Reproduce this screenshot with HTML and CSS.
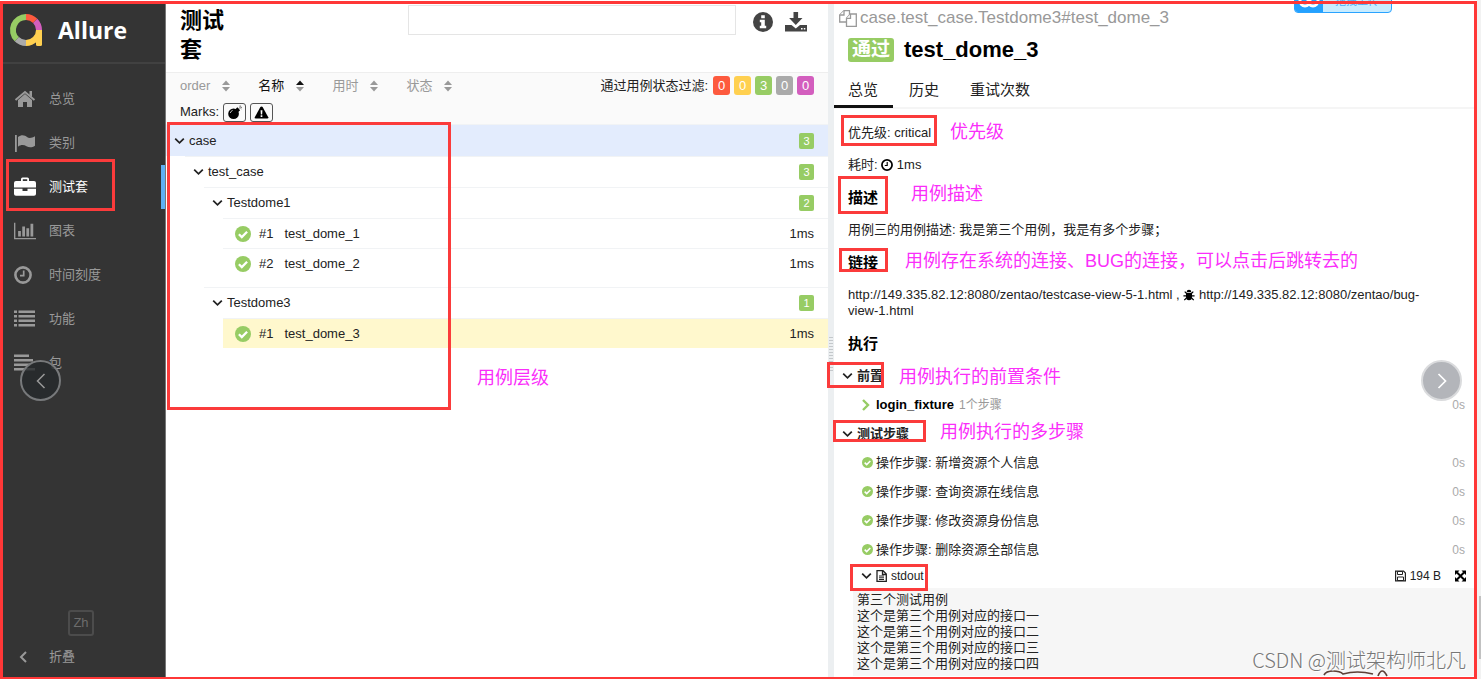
FILE: index.html
```html
<!DOCTYPE html>
<html lang="zh-CN">
<head>
<meta charset="utf-8">
<title>Allure</title>
<link rel="stylesheet" href="styles.css">
</head>
<body>
<svg class="defs" aria-hidden="true">
  <symbol id="check" viewBox="0 0 16 16"><circle cx="8" cy="8" r="8" fill="#97cc64"/><path d="M3.900 8.200l2.900 2.900 5.300-5.300" fill="none" stroke="#fff" stroke-width="2.300"/></symbol>
  <symbol id="down" viewBox="0 0 12 8"><path d="M1.300 1.300L6 6l4.700-4.700" fill="none" stroke="currentColor" stroke-width="1.900"/></symbol>
  <symbol id="sort" viewBox="0 0 8 12"><path class="up" d="M0 5l4-4.500L8 5z"/><path class="dn" d="M0 7l4 4.500L8 7z"/></symbol>
  <symbol id="clock" viewBox="0 0 18 18"><circle cx="9" cy="9" r="7.600" fill="none" stroke="currentColor" stroke-width="2.600"/><path d="M9.300 4.500v5.200H5.700" fill="none" stroke="currentColor" stroke-width="1.700"/></symbol>
</svg>
<div class="frame">
  <aside class="side">
    <a class="brand" href="#">
      <svg class="logo" viewBox="0 0 34 34"><g fill="none" stroke-width="6"><path d="M17 4A13 13 0 0 1 26.200 7.800" stroke="#fd5a3e"/><path d="M26.200 7.800A13 13 0 0 1 30 17" stroke="#d35ebe"/><path d="M30 17A13 13 0 0 1 17 30" stroke="#ffd050"/><path d="M17 30A13 13 0 0 1 7.800 26.200" stroke="#aaa"/><path d="M7.800 26.200A13 13 0 0 1 17 4" stroke="#97cc64"/></g><path d="M27 17h6v14.500q0 1.500-1.500 1.500H28.500q-1.500 0-1.500-1.500z" fill="#ffd050"/></svg>
      <span>Allure</span>
    </a>
    <nav class="nav">
      <a href="#"><svg viewBox="0 0 22 20"><path d="M11 5l7 6v7h-5v-5H9v5H4v-7z"/><path d="M1.500 11L11 3l9.500 8" fill="none" stroke="currentColor" stroke-width="2"/><path d="M15.500 2H18v6l-2.500-2z"/></svg><span>总览</span></a>
      <a href="#"><svg viewBox="0 0 22 20"><path d="M1 2h1.800v17H1zM4 4c4-3 7-1.500 9 0s5 1 8-.8v9.600c-3 2-6 2-8.500.5S7 11.500 4 13.700z"/></svg><span>类别</span></a>
      <a href="#" class="on"><svg viewBox="0 0 22 20"><path d="M7 4V2q0-1.500 1.500-1.500h5Q15 .500 15 2v2h5q2 0 2 2v4.500H0V6q0-2 2-2zm1.800 0h4.400V2.300H8.800zM0 11.800h8.500V14h5v-2.200H22V17q0 1.800-2 1.800H2Q0 18.800 0 17z"/></svg><span>测试套</span></a>
      <a href="#"><svg viewBox="0 0 24 20"><path d="M0 1h1.500v16.500H24V19H0zM4.500 10h3v6h-3zM9 5h3v11H9zM13.500 7h3v9h-3zM18 2h3v14h-3z"/></svg><span>图表</span></a>
      <a href="#"><svg viewBox="0 0 22 20"><circle cx="9" cy="10" r="7.600" fill="none" stroke="currentColor" stroke-width="2.600"/><path d="M9.700 5.500v5.200H6" fill="none" stroke="currentColor" stroke-width="1.700"/></svg><span>时间刻度</span></a>
      <a href="#"><svg viewBox="0 0 22 20"><path d="M0 1.500h3V4H0zM4.500 1.500H21V4H4.500zM0 6h3v2.500H0zM4.500 6H21v2.500H4.500zM0 10.500h3V13H0zM4.500 10.500H21V13H4.500zM0 15h3v2.500H0zM4.500 15H21v2.500H4.500z"/></svg><span>功能</span></a>
      <a href="#"><svg viewBox="0 0 22 20"><path d="M0 1.500h15V4H0zM0 6h19v2.500H0zM0 10.500h16.500V13H0zM0 15h21v2.500H0z"/></svg><span>包</span></a>
    </nav>
    <button class="lang">Zh</button>
    <button class="collapse"><svg viewBox="0 0 8 12"><path d="M7 1L2 6l5 5" fill="none" stroke="currentColor" stroke-width="2"/></svg><span>折叠</span></button>
    <i class="box box-nav"></i>
    <button class="slide prev" aria-label="上一张"><svg viewBox="0 0 10 16"><path d="M8.500 1L1.500 8l7 7" fill="none" stroke="currentColor" stroke-width="1.500"/></svg></button>
  </aside>

  <main class="suites">
    <header class="head">
      <h1>测试套</h1>
      <input class="search" type="text" aria-label="搜索">
      <button class="tool" aria-label="信息"><svg viewBox="0 0 20 20"><circle cx="10" cy="10" r="10"/><path d="M8.200 3.200h3.600v3H8.200zM6.800 7.800h5v6h1.400v2.500H6.800v-2.500h1.400v-3.500H6.800z" fill="#fff"/></svg></button>
      <button class="tool" aria-label="下载"><svg viewBox="0 0 22 20"><path d="M8.500 0h4.600v6h4.400l-6.700 7-6.700-7h4.400zM0 13h6.500l4.300 3.500L15 13h7v6.500H0z"/><path d="M16 16h1.600v1.500H16zM18.800 16h1.500v1.500h-1.500z" fill="#fff"/></svg></button>
    </header>
    <section class="filters">
      <div class="sorts">
        <button>order<svg><use href="#sort"/></svg></button>
        <button class="on">名称<svg><use href="#sort"/></svg></button>
        <button>用时<svg><use href="#sort"/></svg></button>
        <button>状态<svg><use href="#sort"/></svg></button>
        <span class="caption">通过用例状态过滤:</span>
        <span class="counts"><button class="red">0</button><button class="yellow">0</button><button class="green">3</button><button class="gray">0</button><button class="pink">0</button></span>
      </div>
      <div class="marks">
        <span>Marks:</span>
        <button aria-label="bomb"><svg viewBox="0 0 16 16"><circle cx="7" cy="9.300" r="5.700"/><path d="M9 4.500l2-2 3 3-2 2z"/><path d="M12.500 4l1.300-1.500M14 .500v1.500M15.800 2.500h-1.300M15.500 4.500l-.8-.8" stroke="#444" fill="none"/><path d="M3.500 8.500q.500-2 2.500-2.800" stroke="#fff" fill="none" stroke-width=".8"/></svg></button>
        <button aria-label="warning"><svg viewBox="0 0 16 16"><path d="M8 1.500q.8 0 1.200.7l6 10.800q.5 1.500-1.200 1.500H2Q.3 14.500.8 13l6-10.800Q7.200 1.500 8 1.500z"/><path d="M7 5.500h2l-.3 4.500H7.300zM7.100 11h1.800v1.800H7.100z" fill="#fff"/></svg></button>
      </div>
    </section>
    <section class="tree">
      <div class="row top"><svg class="chev"><use href="#down"/></svg><span>case</span><b class="badge">3</b></div>
      <div class="kids">
        <div class="row"><svg class="chev"><use href="#down"/></svg><span>test_case</span><b class="badge">3</b></div>
        <div class="kids">
          <div class="row"><svg class="chev"><use href="#down"/></svg><span>Testdome1</span><b class="badge">2</b></div>
          <div class="kids group">
            <a class="row leaf" href="#"><svg class="tick"><use href="#check"/></svg><span>#1</span><span>test_dome_1</span><span class="time">1ms</span></a>
            <a class="row leaf" href="#"><svg class="tick"><use href="#check"/></svg><span>#2</span><span>test_dome_2</span><span class="time">1ms</span></a>
          </div>
          <div class="row"><svg class="chev"><use href="#down"/></svg><span>Testdome3</span><b class="badge">1</b></div>
          <div class="kids">
            <a class="row leaf chosen" href="#"><svg class="tick"><use href="#check"/></svg><span>#1</span><span>test_dome_3</span><span class="time">1ms</span></a>
          </div>
        </div>
      </div>
    </section>
    <i class="box box-tree"></i>
    <span class="note note-tree">用例层级</span>
  </main>

  <div class="splitter"></div>

  <article class="detail">
    <div class="path"><svg viewBox="0 0 18 17"><g fill="#fff" stroke="#999" stroke-width="1.300"><path d="M5 .700h5.500V12H.7V5z"/><path d="M5 .700V5H.7"/><path d="M11.500 4h5.800v12.300H7.500V8.300z"/><path d="M11.500 4v4.300h-4"/></g></svg>case.test_case.Testdome3#test_dome_3</div>
    <h2><span class="status">通过</span>test_dome_3</h2>
    <nav class="tabs"><a class="on" href="#">总览</a><a href="#">历史</a><a href="#">重试次数</a></nav>
    <div class="body">
      <p>优先级: critical</p>
      <p>耗时: <svg class="mini"><use href="#clock"/></svg> 1ms</p>
      <h3>描述</h3>
      <p>用例三的用例描述: 我是第三个用例，我是有多个步骤；</p>
      <h3>链接</h3>
      <p class="links"><a href="#">http://149.335.82.12:8080/zentao/testcase-view-5-1.html</a> , <a href="#"><svg class="mini bug" viewBox="0 0 14 14"><path d="M4.300 3.500a2.700 2.700 0 0 1 5.400 0zM3.500 4.500h7v5q0 3.500-3.500 3.500T3.500 9.500z"/><path d="M.5 8h13M2 3l2.500 2.500M12 3L9.500 5.500M1.500 13L4 10.500M12.500 13L10 10.500" stroke="#000" stroke-width="1.400"/></svg> http://149.335.82.12:8080/zentao/bug-view-1.html</a></p>
      <h3>执行</h3>
      <div class="stage"><svg class="chev"><use href="#down"/></svg>前置</div>
      <div class="step fixture"><svg class="right" viewBox="0 0 8 12"><path d="M1 1l5 5-5 5" fill="none" stroke="#97cc64" stroke-width="2.400"/></svg><b>login_fixture</b><small>1个步骤</small><span class="time">0s</span></div>
      <div class="stage"><svg class="chev"><use href="#down"/></svg>测试步骤</div>
      <div class="step"><svg class="dot"><use href="#check"/></svg>操作步骤: 新增资源个人信息<span class="time">0s</span></div>
      <div class="step"><svg class="dot"><use href="#check"/></svg>操作步骤: 查询资源在线信息<span class="time">0s</span></div>
      <div class="step"><svg class="dot"><use href="#check"/></svg>操作步骤: 修改资源身份信息<span class="time">0s</span></div>
      <div class="step"><svg class="dot"><use href="#check"/></svg>操作步骤: 删除资源全部信息<span class="time">0s</span></div>
      <div class="attach"><svg class="chev"><use href="#down"/></svg><svg class="file" viewBox="0 0 11 12"><path d="M1 .700h6L10.300 4v7.300H1zM6.500 1v3.500H10" fill="none" stroke="#222" stroke-width="1.300"/><path d="M3 6h5M3 7.800h5M3 9.500h5" stroke="#222"/></svg>stdout
        <span class="size"><svg class="file" viewBox="0 0 11 11"><path d="M.6.600h8L10.400 2.500v7.900H.6z" fill="none" stroke="#222" stroke-width="1.200"/><path d="M2.500 1h5v3h-5zM2.500 6.500h6V10h-6z" fill="none" stroke="#222"/></svg>194 B</span>
        <svg class="file" viewBox="0 0 11 11"><path d="M0 0h4.500L0 4.500zM11 0v4.500L6.500 0zM0 11V6.500L4.500 11zM11 11H6.500L11 6.500z"/><path d="M2 2l7 7M9 2L2 9" stroke="#000" stroke-width="2"/></svg></div>
      <pre>第三个测试用例
这个是第三个用例对应的接口一
这个是第三个用例对应的接口二
这个是第三个用例对应的接口三
这个是第三个用例对应的接口四</pre>
    </div>

    <i class="box box-priority"></i><span class="note note-priority">优先级</span>
    <i class="box box-desc"></i><span class="note note-desc">用例描述</span>
    <i class="box box-link"></i><span class="note note-link">用例存在系统的连接、BUG的连接，可以点击后跳转去的</span>
    <i class="box box-before"></i><span class="note note-before">用例执行的前置条件</span>
    <i class="box box-steps"></i><span class="note note-steps">用例执行的多步骤</span>
    <i class="box box-stdout"></i>
    <div class="upload"><svg viewBox="0 0 28 22"><g fill="none" stroke="#fff" stroke-width="3"><circle cx="10" cy="11" r="5"/><circle cx="18" cy="11" r="5"/></g></svg><span>拖拽上传</span></div>
    <button class="slide next" aria-label="下一张"><svg viewBox="0 0 10 16"><path d="M1.500 1l7 7-7 7" fill="none" stroke="currentColor" stroke-width="1.700"/></svg></button>
    <svg class="cat" viewBox="0 0 68 8"><path d="M1 6Q3 2 10 2t10 3Q34 1 50 5M55 7Q59-3 64 7" fill="none" stroke="#5d4037" stroke-width="1.700"/></svg>
    <span class="mark">CSDN @测试架构师北凡</span>
  </article>
</div>
<i class="thumb"></i>
</body>
</html>
```
FILE: styles.css
```css
* { box-sizing: border-box; }
body { margin: 0; background: #f2f2f2; color: #222; font: 13px/16px "Liberation Sans", "Noto Sans CJK SC", sans-serif; overflow: hidden; }
button, input { font: inherit; color: inherit; background: none; border: 0; padding: 0; margin: 0; }
a { color: inherit; text-decoration: none; }
h1, h2, h3, p, pre { margin: 0; }
svg { display: block; flex: none; fill: currentColor; }
.defs { position: absolute; width: 0; height: 0; }

.frame { position: relative; display: flex; min-height: 100vh; margin-right: 4px; padding: 4px 3px 2px; background: #fff; }
.frame::after { content: ""; position: absolute; inset: 1px 0 0; border: solid #ff3737; border-width: 3px 3px 2px; pointer-events: none; z-index: 5; }
.thumb { position: absolute; right: 0; top: 596px; width: 2px; height: 63px; background: #c1c1c1; }

/* sidebar */
.side { position: relative; flex: none; width: 163px; display: flex; flex-direction: column; background: #343434; color: #999; border-right: 1px solid #777; }
.brand { display: flex; align-items: center; gap: 15px; height: 60px; padding: 0 0 6px 6px; border-bottom: 2px solid #414141; color: #fff; font: bold 23px/28px "Open Sans", sans-serif; }
.logo { width: 34px; height: 34px; }
.nav { padding-top: 13px; }
.nav a { display: flex; align-items: center; height: 44px; padding-left: 11px; }
.nav svg { width: 22px; height: 20px; margin-right: 13px; }
.nav .on { color: #fff; border-right: 4px solid #5fb0f5; }
.lang { width: 26px; height: 26px; margin: auto 0 0 65px; border: 2px solid #4c4c4c; border-radius: 3px; color: #6c6c6c; }
.collapse { display: flex; align-items: center; gap: 22px; height: 41px; padding-left: 16px; }
.collapse svg { width: 8px; height: 12px; }

/* suites */
.suites { position: relative; flex: 662 1 0; min-width: 0; }
.head { display: flex; align-items: flex-start; height: 68px; padding: 2px 21px 0 14px; color: #444; }
h1 { width: 52px; font-size: 22px; line-height: 29px; color: #000; }
.search { flex: 1; max-width: 328px; height: 30px; margin: -1px 16px 0 auto; border: 1px solid #e5e5e5; }
.tool { width: 22px; height: 20px; margin-top: 6px; }
.tool + .tool { margin-left: 11px; }
.tool svg { width: 22px; height: 20px; }
.filters { height: 52px; padding: 3px 14px 0; background: #fafafa; border-top: 1px solid #eee; }
.sorts { display: flex; align-items: center; height: 19px; color: #999; }
.sorts > button { display: flex; align-items: center; gap: 12px; margin-right: 28px; }
.sorts > button svg { width: 8px; height: 12px; }
.sorts .on { color: #111; }
.dn { fill: #999; }
.caption { margin-left: auto; color: #222; }
.counts { display: flex; gap: 4px; margin-left: 5px; }
.counts button { width: 17px; height: 19px; border-radius: 3px; color: #fff; }
.counts .red { background: #fd5a3e; }
.counts .yellow { background: #ffd050; }
.counts .green { background: #97cc64; }
.counts .gray { background: #aaa; }
.counts .pink { background: #d35ebe; }
.marks { display: flex; align-items: center; gap: 4px; margin-top: 7px; height: 20px; }
.marks button { display: grid; place-items: center; width: 23px; height: 19px; border: 1px solid #555; border-radius: 3px; color: #000; }
.marks svg { width: 15px; height: 15px; }

.row { display: flex; align-items: center; height: 31px; padding: 0 14px 0 8px; border-top: 1px solid #f1f3f5; }
.row.top { height: 32px; background: #e3ecfd; }
.chev { width: 11px; height: 8px; margin-right: 4px; }
.kids { margin-left: 19px; }
.badge { display: grid; place-items: center; width: 15px; height: 16px; margin-left: auto; background: #97cc64; color: #fff; border-radius: 2px; font-size: 11px; font-weight: normal; }
.group { padding-bottom: 9px; }
.leaf { height: 30px; padding-left: 12px; gap: 11px; }
.tick { width: 16px; height: 16px; margin-right: -3px; }
.time { margin-left: auto; }
.chosen { background: #fff8cd; }

.splitter { flex: none; width: 6px; background: #eceff1; }
.splitter::before { content: ""; display: block; height: 36px; margin: 333px 1px 0; background: repeating-linear-gradient(#c4c8cb 0 1px, transparent 1px 3px); }

/* detail */
.detail { position: relative; flex: 640 1 0; min-width: 0; }
.path { display: flex; align-items: center; gap: 3px; height: 28px; padding-left: 5px; color: #999; font-size: 17px; }
.path svg { width: 18px; height: 17px; }
h2 { display: flex; align-items: center; gap: 10px; height: 36px; padding-left: 14px; color: #000; font-size: 22px; line-height: 26px; }
.status { padding: 0 4px; border-radius: 3px; background: #97cc64; color: #fff; font-size: 19px; line-height: 24px; }
.tabs { display: flex; height: 41px; border-bottom: 2px solid #f5f5f5; font-size: 15px; line-height: 44px; }
.tabs a { height: 40px; padding: 0 16px 0 15px; }
.tabs .on { padding: 0 15px 0 14px; border-bottom: 3px solid #111; }
.tabs .on + a { padding-left: 16px; }
.body { padding: 16px 0 0 14px; }
.body p { margin-bottom: 16px; }
.body h3 { margin-bottom: 16px; font-size: 15px; line-height: 17px; color: #000; }
.body .links { padding-right: 34px; }
.body .links + h3 { margin-bottom: 9px; }
.mini { display: inline-block; width: 12px; height: 12px; vertical-align: -2px; color: #000; }
.stage { display: flex; align-items: center; height: 29px; margin-left: -6px; font-weight: bold; }
.step { display: flex; align-items: center; height: 29px; padding: 0 9px 0 14px; }
.step .time { color: #aaa; font-size: 12px; }
.fixture b { margin: 0 5px 0 6px; color: #000; }
.right { width: 8px; height: 12px; }
.fixture small { color: #999; font-size: 12px; }
.dot { width: 11px; height: 11px; margin-right: 3px; }
.attach { display: flex; align-items: center; height: 24px; padding: 0 8px 0 13px; font-size: 12px; }
.file { width: 11px; height: 12px; margin-right: 4px; color: #000; }
.size { display: flex; align-items: center; margin: 0 14px 0 auto; }
.attach > .file:last-child { margin-right: 0; }
pre { margin-left: 5px; padding: 4px; background: #f6f6f6; font: 13px/16px "Liberation Sans", "Noto Sans CJK SC", sans-serif; }

/* overlays */
.box { position: absolute; border: 3px solid #fb3b3b; }
.note { position: absolute; color: #fa2efa; font-size: 18px; line-height: 24px; white-space: nowrap; }
.box-nav { left: 3px; top: 155px; width: 109px; height: 52px; }
.box-tree { left: 1px; top: 118px; width: 284px; height: 288px; }
.note-tree { left: 311px; top: 362px; }
.box-priority { left: 7px; top: 111px; width: 96px; height: 31px; }
.note-priority { left: 116px; top: 116px; }
.box-desc { left: 4px; top: 172px; width: 50px; height: 38px; }
.note-desc { left: 77px; top: 178px; }
.box-link { left: 5px; top: 244px; width: 49px; height: 24px; }
.note-link { left: 71px; top: 245px; }
.box-before { left: -7px; top: 358px; width: 57px; height: 26px; }
.note-before { left: 65px; top: 361px; }
.box-steps { left: -1px; top: 416px; width: 93px; height: 22px; }
.note-steps { left: 106px; top: 416px; }
.box-stdout { left: 16px; top: 560px; width: 78px; height: 27px; }
.upload { position: absolute; right: 82px; top: -17px; display: flex; width: 98px; height: 26px; border: 1px solid #2aa3ff; border-radius: 4px; background: #c8ecff; color: #4badf5; font-size: 11px; line-height: 26px; overflow: hidden; }
.upload svg { width: 28px; height: 26px; background: #24a1ff; }
.upload span { margin-left: 12px; }
.slide { position: absolute; top: 356px; display: grid; place-items: center; width: 41px; height: 41px; border-radius: 50%; border: 2px solid #77797b; background: rgba(38, 41, 44, .8); color: #999; }
.slide svg { width: 10px; height: 16px; }
.prev { left: 17px; }
.next { right: 12px; border-color: #dadbdd; background: #b3b5ba; color: #fff; }
.mark { position: absolute; right: 8px; bottom: 4px; color: #777; font: 300 20px/26px "Noto Sans CJK SC", sans-serif; text-shadow: 1px 1px #fff; white-space: nowrap; }
.cat { position: absolute; right: 83px; bottom: 0; width: 68px; height: 8px; }
```
